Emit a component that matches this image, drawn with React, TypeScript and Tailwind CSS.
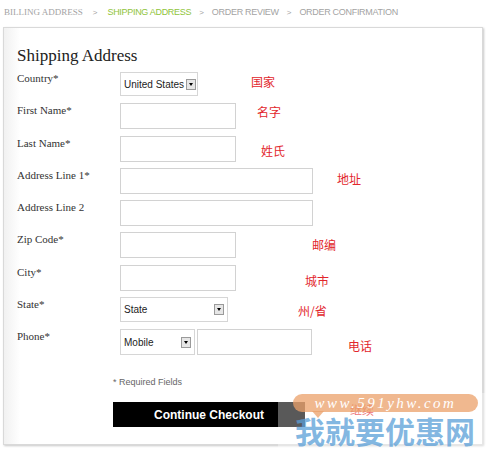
import React from 'react'

const serif = 'font-[family-name:Liberation_Serif,serif]'
const sans = 'font-[family-name:Liberation_Sans,Arial,sans-serif]'
const cjk = 'font-[family-name:Noto_Sans_CJK_SC,sans-serif]'

function Caret() {
  return (
    <span className="flex h-[11px] w-[10px] shrink-0 items-center justify-center border border-[#9a9a9a] bg-[#e6e6e6]">
      <span className="h-0 w-0 border-x-[2.5px] border-t-[3px] border-x-transparent border-t-black" />
    </span>
  )
}

function Select({ value, width, height = 'h-[25px]' }: { value: string; width: string; height?: string }) {
  return (
    <div className={`flex ${width} ${height} items-center justify-between gap-[2px] whitespace-nowrap border border-[#d6d6d6] bg-white pl-[3px] pr-[3px] text-[10px] text-[#222] ${sans}`}>
      <span>{value}</span>
      <Caret />
    </div>
  )
}

function TextBox({ width }: { width: string }) {
  return <input type="text" readOnly className={`${width} h-[26px] border border-[#d2d2d2] bg-white outline-none`} />
}

function Note({ text, className }: { text: string; className: string }) {
  return <span className={`text-[12px] leading-[14px] text-[#e2262c] ${cjk} ${className}`}>{text}</span>
}

function Row({ label, children }: { label: string; children: React.ReactNode }) {
  return (
    <div className="flex h-[26px] items-start">
      <label className={`w-[103px] shrink-0 text-[11px] leading-[14px] text-[#333] ${serif}`}>{label}</label>
      {children}
    </div>
  )
}

export default function App() {
  return (
    <div className="relative h-[457px] w-[493px] overflow-hidden bg-white">
      {/* checkout steps */}
      <nav className={`flex h-[24px] items-center pl-[4px] pt-[1px] text-[9px] uppercase text-[#a3a3a3] ${sans}`}>
        <span className={`text-[9px] ${serif}`}>Billing Address</span>
        <span className="mx-[10px] text-[8px]">&gt;</span>
        <span className="tracking-[-0.3px] text-[#8fc43a]">Shipping Address</span>
        <span className="mx-[8px] text-[8px]">&gt;</span>
        <span className="tracking-[-0.3px]">Order Review</span>
        <span className="mx-[8px] text-[8px]">&gt;</span>
        <span className="tracking-[-0.3px]">Order Confirmation</span>
      </nav>

      <div className="ml-[3px] mt-[3px] h-[418px] w-[480px] border border-[#d9d9d9] bg-[linear-gradient(to_right,#f1f1f1,#ffffff_16px)] pl-[13px] pt-[18px] shadow-[1px_1px_2px_rgba(0,0,0,0.22)]">
        <h2 className={`h-[20px] text-[17px] leading-[20px] text-[#222] ${serif}`}>Shipping Address</h2>

        <div className="mt-[5px] flex flex-col gap-[6.25px]">
          <Row label="Country*">
            <div className="mt-[1px]">
              <Select value="United States" width="w-[78px]" height="h-[24px]" />
            </div>
            <Note text="国家" className="ml-[53px] mt-[4px]" />
          </Row>
          <Row label="First Name*">
            <TextBox width="w-[116px]" />
            <Note text="名字" className="ml-[21px] mt-[2px]" />
          </Row>
          <Row label="Last Name*">
            <TextBox width="w-[116px]" />
            <Note text="姓氏" className="ml-[25px] mt-[8px]" />
          </Row>
          <Row label="Address Line 1*">
            <TextBox width="w-[193px]" />
            <Note text="地址" className="ml-[24px] mt-[4px]" />
          </Row>
          <Row label="Address Line 2">
            <TextBox width="w-[193px]" />
          </Row>
          <Row label="Zip Code*">
            <TextBox width="w-[116px]" />
            <Note text="邮编" className="ml-[76px] mt-[6px]" />
          </Row>
          <Row label="City*">
            <TextBox width="w-[116px]" />
            <Note text="城市" className="ml-[69px] mt-[9px]" />
          </Row>
          <Row label="State*">
            <Select value="State" width="w-[108px]" />
            <Note text="州/省" className="ml-[70px] mt-[7px]" />
          </Row>
          <Row label="Phone*">
            <Select value="Mobile" width="w-[75px]" height="h-[26px]" />
            <div className="ml-[2px]">
              <TextBox width="w-[115px]" />
            </div>
            <Note text="电话" className="ml-[36px] mt-[10px]" />
          </Row>
        </div>

        <p className={`ml-[96px] mt-[21px] text-[9px] leading-[12px] text-[#666] ${sans}`}>* Required Fields</p>

        <div className="ml-[96px] mt-[14px] flex items-start">
          <button className={`flex h-[25px] w-[192px] items-center justify-center bg-black text-[12px] font-bold text-white ${sans}`}>
            Continue Checkout
          </button>
          <Note text="继续" className="ml-[45px] mt-[1px]" />
        </div>
      </div>

      {/* site watermark */}
      <div className="absolute left-[278px] top-[393px] h-[56px] w-[210px] bg-white/35" />
      <div className="absolute left-[293px] top-[394px] flex h-[18px] w-[185px] items-center justify-center rounded-full bg-[#eba06a]/75">
        <span className="text-[15px] italic leading-[18px] tracking-[2.5px] text-white font-[family-name:Liberation_Serif,serif]">www.591yhw.com</span>
      </div>
      <div className="absolute left-[312px] top-[411px] h-0 w-0 border-x-[6px] border-t-[7px] border-x-transparent border-t-[#eba06a]/75" />
      <div className={`absolute left-[295px] top-[414px] text-[30px] font-bold leading-[32px] text-[#5a9fd8]/75 ${cjk}`}>我就要优惠网</div>
    </div>
  )
}
